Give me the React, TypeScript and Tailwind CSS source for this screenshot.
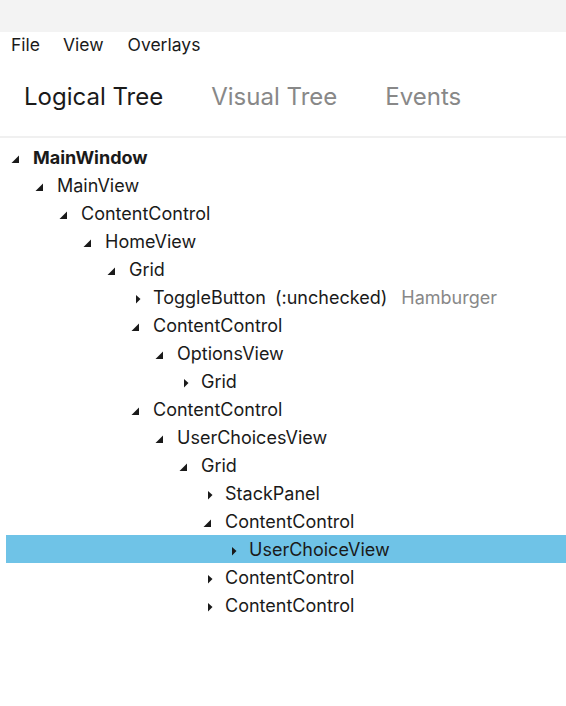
import React from 'react';

type Node = {
  name: string;
  level: number;
  open: boolean;
  bold?: boolean;
  extra?: string;
  tag?: string;
  selected?: boolean;
};

const nodes: Node[] = [
  { name: 'MainWindow', level: 0, open: true, bold: true },
  { name: 'MainView', level: 1, open: true },
  { name: 'ContentControl', level: 2, open: true },
  { name: 'HomeView', level: 3, open: true },
  { name: 'Grid', level: 4, open: true },
  { name: 'ToggleButton', level: 5, open: false, extra: '(:unchecked)', tag: 'Hamburger' },
  { name: 'ContentControl', level: 5, open: true },
  { name: 'OptionsView', level: 6, open: true },
  { name: 'Grid', level: 7, open: false },
  { name: 'ContentControl', level: 5, open: true },
  { name: 'UserChoicesView', level: 6, open: true },
  { name: 'Grid', level: 7, open: true },
  { name: 'StackPanel', level: 8, open: false },
  { name: 'ContentControl', level: 8, open: true },
  { name: 'UserChoiceView', level: 9, open: false, selected: true },
  { name: 'ContentControl', level: 8, open: false },
  { name: 'ContentControl', level: 8, open: false },
];

const Arrow = ({ open }: { open: boolean }) =>
  open ? (
    <svg width="12" height="12" viewBox="0 0 12 12" className="shrink-0">
      <path d="M9 4.5 L9 12 L1.5 12 Z" fill="#1a1a1a" />
    </svg>
  ) : (
    <svg width="12" height="12" viewBox="0 0 12 12" className="shrink-0 overflow-visible">
      <path d="M6 4 L10.5 8 L6 12.5 Z" fill="#1a1a1a" />
    </svg>
  );

export default function App() {
  return (
    <div className="w-[566px] h-[706px] bg-white overflow-hidden text-[#1a1a1a] font-['Inter',sans-serif]">
      <div className="h-8 bg-[#f3f3f3]" />

      {/* menu */}
      <div className="flex h-[26px] items-center text-[17.5px] leading-none">
        <span className="px-[11px]">File</span>
        <span className="px-3">View</span>
        <span className="px-3">Overlays</span>
      </div>

      {/* tabs */}
      <div className="flex h-[80px] items-center text-[24px] border-b-2 border-[#f0f0f0]">
        <span className="px-6">Logical Tree</span>
        <span className="px-6 text-[#888888]">Visual Tree</span>
        <span className="px-6 text-[#888888]">Events</span>
      </div>

      {/* tree */}
      <div className="pt-[5px] pl-[6px] text-[18px]">
        {nodes.map((n, i) => (
          <div
            key={i}
            className={`flex h-7 items-center ${n.selected ? 'bg-[#6fc3e7]' : ''}`}
            style={{ paddingLeft: 4 + n.level * 24 }}
          >
            <Arrow open={n.open} />
            <span className={`ml-[11px] ${n.bold ? 'font-bold' : ''}`}>{n.name}</span>
            {n.extra && <span className="ml-[9px]">{n.extra}</span>}
            {n.tag && <span className="ml-[14px] text-[#888888]">{n.tag}</span>}
          </div>
        ))}
      </div>
    </div>
  );
}
